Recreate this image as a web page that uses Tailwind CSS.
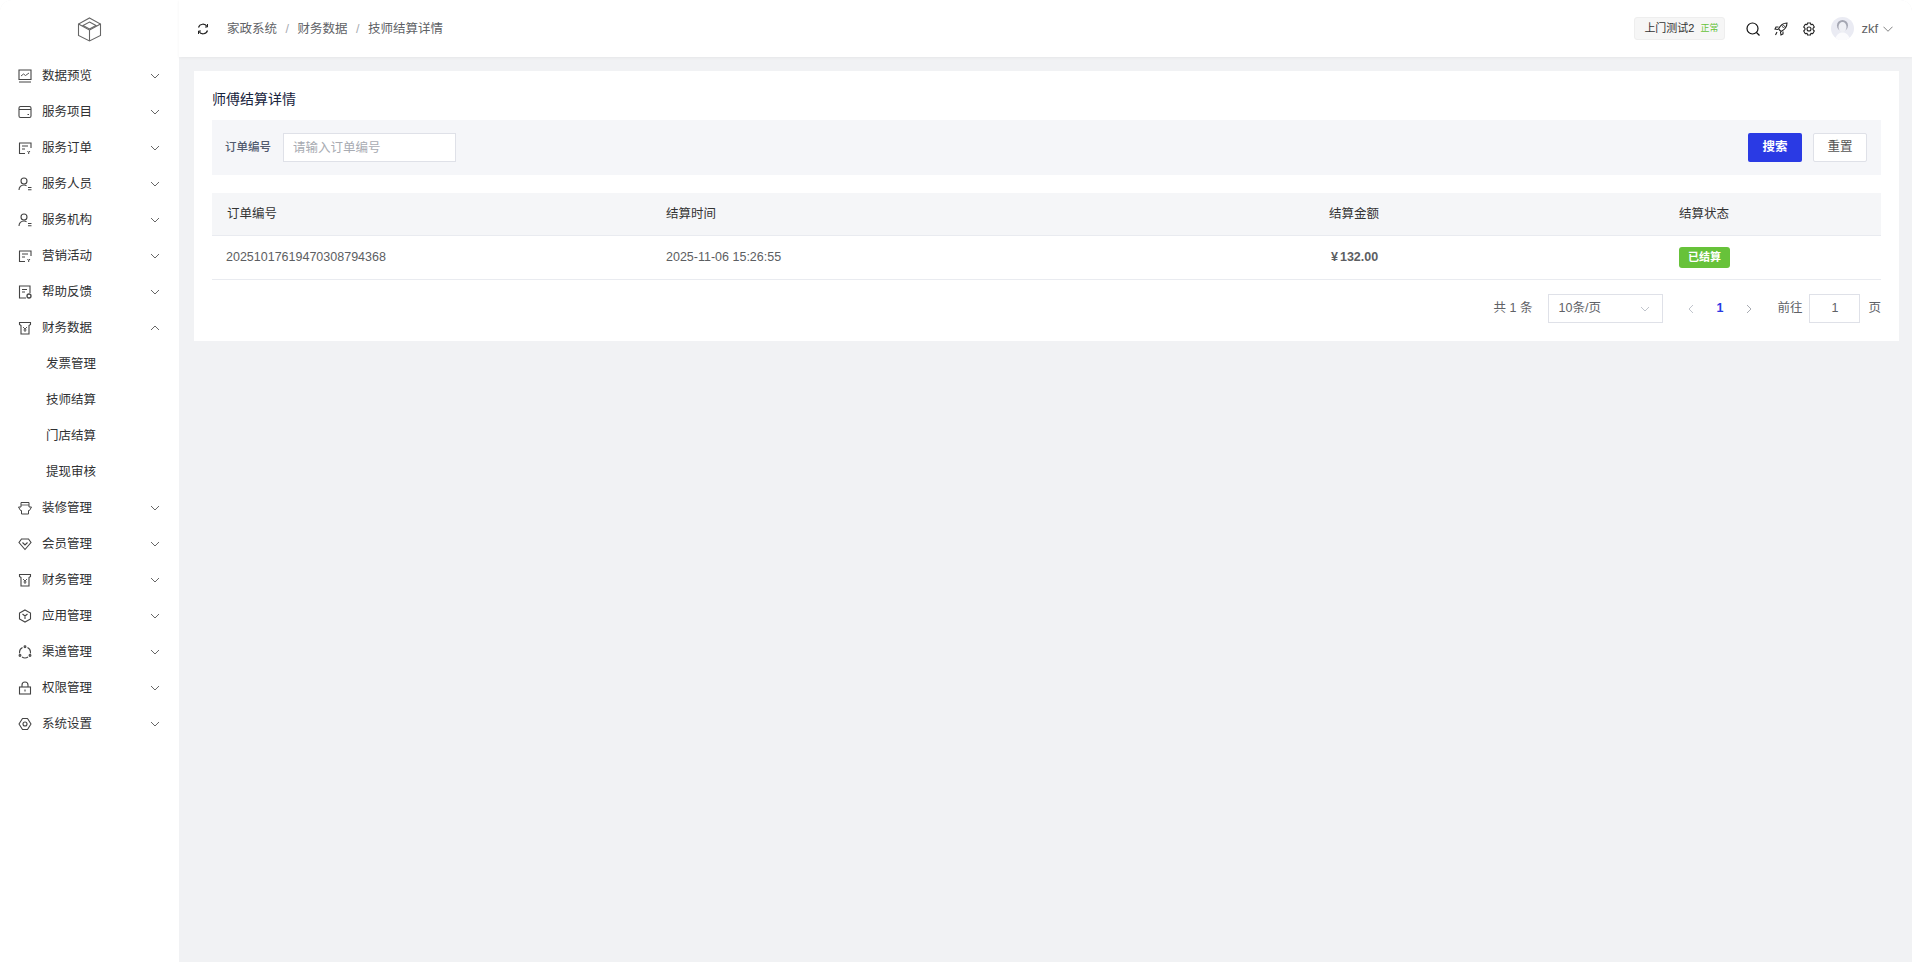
<!DOCTYPE html>
<html lang="zh-CN">
<head>
<meta charset="UTF-8">
<title>技师结算详情</title>
<script src="https://cdn.jsdelivr.net/npm/@tailwindcss/browser@4"></script>
</head>
<body class="bg-white">
<svg width="0" height="0" class="absolute">
  <defs>
    <symbol id="chev" viewBox="0 0 10 6"><path d="M1 1l4 4 4-4" fill="none" stroke="#555" stroke-width="0.9"/></symbol>
    <symbol id="order" viewBox="0 0 14 14"><path d="M13 7V2H1.500v10.500H7M4 5h6M4 8h3" fill="none" stroke="#444" stroke-width="1.100"/><path d="M9.500 10l1.200 1.500L12 10M10.700 11.500V13" fill="none" stroke="#444" stroke-width="1"/></symbol>
    <symbol id="person" viewBox="0 0 14 14"><circle cx="6" cy="4" r="3" fill="none" stroke="#444" stroke-width="1.100"/><path d="M1 13c0-3 2-5 5-5 1 0 2 .3 2.500 .8" fill="none" stroke="#444" stroke-width="1.100"/><path d="M10 10.500h3.500M10 12.800h3.500" stroke="#444" stroke-width="1.100"/></symbol>
    <symbol id="cash" viewBox="0 0 14 14"><path d="M1.500 1.500h11v2l-1.500 1V13H3V4.500l-1.500-1z" fill="none" stroke="#444" stroke-width="1.100"/><path d="M5 6l2 2 2-2M7 8v3M5.500 9h3" fill="none" stroke="#444" stroke-width="0.900"/></symbol>
  </defs>
</svg>
<div class="flex h-[962px] w-[1912px] overflow-hidden rounded-t-xl bg-[#f1f2f4] font-['Liberation_Sans','Noto_Sans_CJK_SC',sans-serif] text-[12.5px] text-[#5c5e62]">
  <aside class="w-[179px] shrink-0 bg-white">
    <div class="flex h-[57px] items-center justify-center pt-[1px]">
      <svg width="25" height="25" viewBox="0 0 25 25" fill="none" stroke="#666" stroke-width="1.100"><path d="M12.500 1L23.500 7V18.500L12.500 24L1.500 18.500V7z"/><path d="M12.500 5L19 8.500L12.500 12L6 8.500z"/><path d="M1.500 7L12.500 13V24M23.500 7L12.500 13"/></svg>
    </div>
    <nav class="pt-[1px] text-[#303133]">
      <a class="flex h-9 items-center pl-[18px] pr-[19px]"><svg class="mr-[10px] h-[14px] w-[14px]" viewBox="0 0 14 14" fill="none" stroke="#444" stroke-width="1.100"><path d="M1 1h12v9.500H1zM1 13h12"/><path d="M3 7l2.500-2 2 1.500L11 4" stroke-width="0.900"/></svg><span class="flex-1">数据预览</span><svg class="h-[6px] w-[10px]"><use href="#chev"/></svg></a>
      <a class="flex h-9 items-center pl-[18px] pr-[19px]"><svg class="mr-[10px] h-[14px] w-[14px]" viewBox="0 0 14 14" fill="none" stroke="#444" stroke-width="1.100"><rect x="1" y="1.500" width="12" height="11" rx="1.500"/><path d="M1 4.500h12M9.500 9.500h1.500"/></svg><span class="flex-1">服务项目</span><svg class="h-[6px] w-[10px]"><use href="#chev"/></svg></a>
      <a class="flex h-9 items-center pl-[18px] pr-[19px]"><svg class="mr-[10px] h-[14px] w-[14px]"><use href="#order"/></svg><span class="flex-1">服务订单</span><svg class="h-[6px] w-[10px]"><use href="#chev"/></svg></a>
      <a class="flex h-9 items-center pl-[18px] pr-[19px]"><svg class="mr-[10px] h-[14px] w-[14px]"><use href="#person"/></svg><span class="flex-1">服务人员</span><svg class="h-[6px] w-[10px]"><use href="#chev"/></svg></a>
      <a class="flex h-9 items-center pl-[18px] pr-[19px]"><svg class="mr-[10px] h-[14px] w-[14px]"><use href="#person"/></svg><span class="flex-1">服务机构</span><svg class="h-[6px] w-[10px]"><use href="#chev"/></svg></a>
      <a class="flex h-9 items-center pl-[18px] pr-[19px]"><svg class="mr-[10px] h-[14px] w-[14px]"><use href="#order"/></svg><span class="flex-1">营销活动</span><svg class="h-[6px] w-[10px]"><use href="#chev"/></svg></a>
      <a class="flex h-9 items-center pl-[18px] pr-[19px]"><svg class="mr-[10px] h-[14px] w-[14px]" viewBox="0 0 14 14" fill="none" stroke="#444" stroke-width="1.100"><path d="M8 13H1.500V1H12v7"/><path d="M4 4.500h5M4 7h3"/><circle cx="11" cy="11" r="2" stroke-width="1.300"/></svg><span class="flex-1">帮助反馈</span><svg class="h-[6px] w-[10px]"><use href="#chev"/></svg></a>
      <a class="flex h-9 items-center pl-[18px] pr-[19px]"><svg class="mr-[10px] h-[14px] w-[14px]"><use href="#cash"/></svg><span class="flex-1">财务数据</span><svg class="h-[6px] w-[10px] rotate-180"><use href="#chev"/></svg></a>
      <a class="flex h-9 items-center pl-[46px]">发票管理</a>
      <a class="flex h-9 items-center pl-[46px]">技师结算</a>
      <a class="flex h-9 items-center pl-[46px]">门店结算</a>
      <a class="flex h-9 items-center pl-[46px]">提现审核</a>
      <a class="flex h-9 items-center pl-[18px] pr-[19px]"><svg class="mr-[10px] h-[14px] w-[14px]" viewBox="0 0 14 14" fill="none" stroke="#444" stroke-width="1"><path d="M3 1.500h8V6h2.500L11.500 9.500h-1V13h-7V9.500h-1L.5 6H3z"/><path d="M3 4h8" stroke-width="0.800"/></svg><span class="flex-1">装修管理</span><svg class="h-[6px] w-[10px]"><use href="#chev"/></svg></a>
      <a class="flex h-9 items-center pl-[18px] pr-[19px]"><svg class="mr-[10px] h-[14px] w-[14px]" viewBox="0 0 14 14" fill="none" stroke="#444" stroke-width="1.100"><path d="M3.500 2h7L13 5.500 7 12.500 1 5.500z"/><path d="M4.500 5.500L7 8l2.500-2.500"/></svg><span class="flex-1">会员管理</span><svg class="h-[6px] w-[10px]"><use href="#chev"/></svg></a>
      <a class="flex h-9 items-center pl-[18px] pr-[19px]"><svg class="mr-[10px] h-[14px] w-[14px]"><use href="#cash"/></svg><span class="flex-1">财务管理</span><svg class="h-[6px] w-[10px]"><use href="#chev"/></svg></a>
      <a class="flex h-9 items-center pl-[18px] pr-[19px]"><svg class="mr-[10px] h-[14px] w-[14px]" viewBox="0 0 14 14" fill="none" stroke="#444" stroke-width="1.100"><path d="M7 1l5.500 3v6L7 13l-5.500-3V4z"/><path d="M4.500 5L7 7l2.500-2M7 7v3"/></svg><span class="flex-1">应用管理</span><svg class="h-[6px] w-[10px]"><use href="#chev"/></svg></a>
      <a class="flex h-9 items-center pl-[18px] pr-[19px]"><svg class="mr-[10px] h-[14px] w-[14px]" viewBox="0 0 14 14" fill="none" stroke="#444" stroke-width="1.100"><path d="M4.500 2.500a5.500 5.500 0 0 0-2.800 6M9.500 2.500a5.500 5.500 0 0 1 2.800 6M4 12a5.500 5.500 0 0 0 6 0"/><circle cx="7" cy="1.800" r="0.900"/><circle cx="2" cy="10.500" r="0.900"/><circle cx="12" cy="10.500" r="0.900"/></svg><span class="flex-1">渠道管理</span><svg class="h-[6px] w-[10px]"><use href="#chev"/></svg></a>
      <a class="flex h-9 items-center pl-[18px] pr-[19px]"><svg class="mr-[10px] h-[14px] w-[14px]" viewBox="0 0 14 14" fill="none" stroke="#444" stroke-width="1.100"><rect x="1.500" y="6" width="11" height="7"/><path d="M4 6V4a3 3 0 0 1 6 0v2M7 8.500v2"/></svg><span class="flex-1">权限管理</span><svg class="h-[6px] w-[10px]"><use href="#chev"/></svg></a>
      <a class="flex h-9 items-center pl-[18px] pr-[19px]"><svg class="mr-[10px] h-[14px] w-[14px]" viewBox="0 0 14 14" fill="none" stroke="#444" stroke-width="1.100"><path d="M4.500 1.500h5L13 7l-3.500 5.500h-5L1 7z" stroke-linejoin="round"/><circle cx="7" cy="7" r="2"/></svg><span class="flex-1">系统设置</span><svg class="h-[6px] w-[10px]"><use href="#chev"/></svg></a>
    </nav>
  </aside>
  <div class="flex min-w-0 flex-1 flex-col">
    <header class="flex h-[57px] shrink-0 items-center bg-white pl-[18px] pr-[19px] shadow-[0_1px_3px_rgba(0,0,0,0.05)]">
      <svg width="12" height="12" viewBox="0 0 12 12" fill="none" stroke="#222" stroke-width="1.200"><path d="M1.500 4.500A4.700 4.700 0 0 1 10 3.500M10.500 7.500A4.700 4.700 0 0 1 2 8.500"/><path d="M10.500 1v3H8M1.500 11V8H4" stroke-width="1"/></svg>
      <div class="ml-[18px] flex items-center pt-[2px] text-[#606266]">
        <span>家政系统</span><span class="mx-[8.5px] text-[#a8abb2]">/</span><span>财务数据</span><span class="mx-[8.5px] text-[#a8abb2]">/</span><span>技师结算详情</span>
      </div>
      <div class="ml-auto flex items-center">
        <div class="flex h-[23px] w-[91px] items-center rounded-[3px] border border-[#eeeeee] bg-[#f6f6f6] pl-[9px] text-[11px] text-[#333]">上门测试2<span class="ml-[6px] text-[9px] text-[#67c23a]">正常</span></div>
        <svg class="ml-[21px]" width="14" height="14" viewBox="0 0 14 14" fill="none" stroke="#111" stroke-width="1.200"><circle cx="6.500" cy="6.500" r="5.500"/><path d="M10.500 10.500l3 3"/></svg>
        <svg class="ml-[14px]" width="14" height="14" viewBox="0 0 14 14" fill="none" stroke="#222" stroke-width="1.100"><path d="M13 1c-4 0-6.500 2-8.500 6L7 9.500c4-2 6-4.500 6-8.500z"/><path d="M4.500 5H2L1 7l3 .5M9 9.500V12l-2 1-.5-3M3 10l-1.500 3"/><circle cx="9.500" cy="4.500" r="1" stroke-width="0.800"/></svg>
        <svg class="ml-[14px]" width="14" height="14" viewBox="0 0 14 14" fill="none" stroke="#222" stroke-width="1.100"><path d="M5.500 1h3l.5 1.800 1.700-.5 1.600 2.700-1.300 1.300v1.400l1.300 1.300-1.600 2.700-1.700-.5L8.500 13h-3L5 11.200l-1.700.5L1.700 9 3 7.700V6.300L1.700 5l1.600-2.700 1.700.5z" stroke-linejoin="round"/><circle cx="7" cy="7" r="2"/></svg>
        <svg class="ml-[15px]" width="23" height="23" viewBox="0 0 23 23"><circle cx="11.500" cy="11.500" r="11.500" fill="#eaebf3"/><ellipse cx="11.500" cy="8.500" rx="5.500" ry="5.500" fill="#a4a6b2"/><ellipse cx="11.500" cy="10" rx="4" ry="5" fill="#eff0f5"/><path d="M4.500 21c1-3.500 4-5.500 7-5.500s6 2 7 5.500a11.500 11.500 0 0 1-14 0z" fill="#fbfbfd"/></svg>
        <span class="ml-[7px] text-[13px] text-[#606266]">zkf</span>
        <svg class="ml-[5px]" width="10" height="6" viewBox="0 0 11 6" fill="none" stroke="#666" stroke-width="0.900"><path d="M.5.500l5 5 5-5"/></svg>
      </div>
    </header>
    <main class="flex-1 pl-[15px] pr-[13px] pt-[14px]">
      <section class="h-[270px] bg-white px-[18px] pt-[18px]">
        <h2 class="h-[31px] text-[14px] font-normal leading-[21px] text-[#17233d]">师傅结算详情</h2>
        <div class="flex h-[55px] items-center bg-[#f5f6f9] pl-[13px] pr-[14px]">
          <span class="mr-[12px] text-[11.500px] font-medium text-[#515a6e]">订单编号</span>
          <input class="h-[29px] w-[173px] border border-[#dfe1e8] bg-white px-[9px] text-[12.500px] outline-none placeholder:text-[#a8abb2]" placeholder="请输入订单编号">
          <button class="ml-auto h-[29px] w-[54px] rounded-[2px] bg-[#2a3ae4] text-[12.500px] font-bold text-white">搜索</button>
          <button class="ml-[11px] h-[29px] w-[54px] rounded-[2px] border border-[#dfe1e8] bg-white text-[12.500px] text-[#555]">重置</button>
        </div>
        <div class="mt-[18px]">
          <div class="grid h-[43px] grid-cols-[454px_663px_350px_1fr] items-center border-b border-[#e9ebf0] bg-[#f5f6f8] text-[#333]">
            <div class="pl-[15px]">订单编号</div>
            <div>结算时间</div>
            <div>结算金额</div>
            <div>结算状态</div>
          </div>
          <div class="grid h-[44px] grid-cols-[454px_663px_350px_1fr] items-center border-b border-[#e9ebf0]">
            <div class="pl-[14px]">20251017619470308794368</div>
            <div>2025-11-06 15:26:55</div>
            <div class="pl-[2px] font-bold">¥<span class="ml-[2px]">132.00</span></div>
            <div><span class="inline-flex h-[21px] w-[51px] items-center justify-center rounded-[3px] bg-[#67c23a] text-[11px] font-bold text-white">已结算</span></div>
          </div>
        </div>
        <div class="mt-[14px] flex h-[29px] items-center justify-end text-[#606266]">
          <span>共 1 条</span>
          <div class="ml-[15px] flex h-[29px] w-[115px] items-center justify-between border border-[#dfe1e8] pl-[10px] pr-[12px]">10条/页<svg width="10" height="6" viewBox="0 0 10 6" fill="none" stroke="#c0c4cc"><path d="M1 1l4 4 4-4"/></svg></div>
          <svg class="ml-[25px]" width="6" height="10" viewBox="0 0 6 10" fill="none" stroke="#c0c4cc"><path d="M5 1L1 5l4 4"/></svg>
          <span class="ml-[23px] font-bold text-[#2a3ae4]">1</span>
          <svg class="ml-[23px]" width="6" height="10" viewBox="0 0 6 10" fill="none" stroke="#a8abb2"><path d="M1 1l4 4-4 4"/></svg>
          <span class="ml-[25px]">前往</span>
          <div class="ml-[7px] flex h-[29px] w-[51px] items-center justify-center border border-[#dfe1e8]">1</div>
          <span class="ml-[8px]">页</span>
        </div>
      </section>
    </main>
  </div>
</div>
</body>
</html>
